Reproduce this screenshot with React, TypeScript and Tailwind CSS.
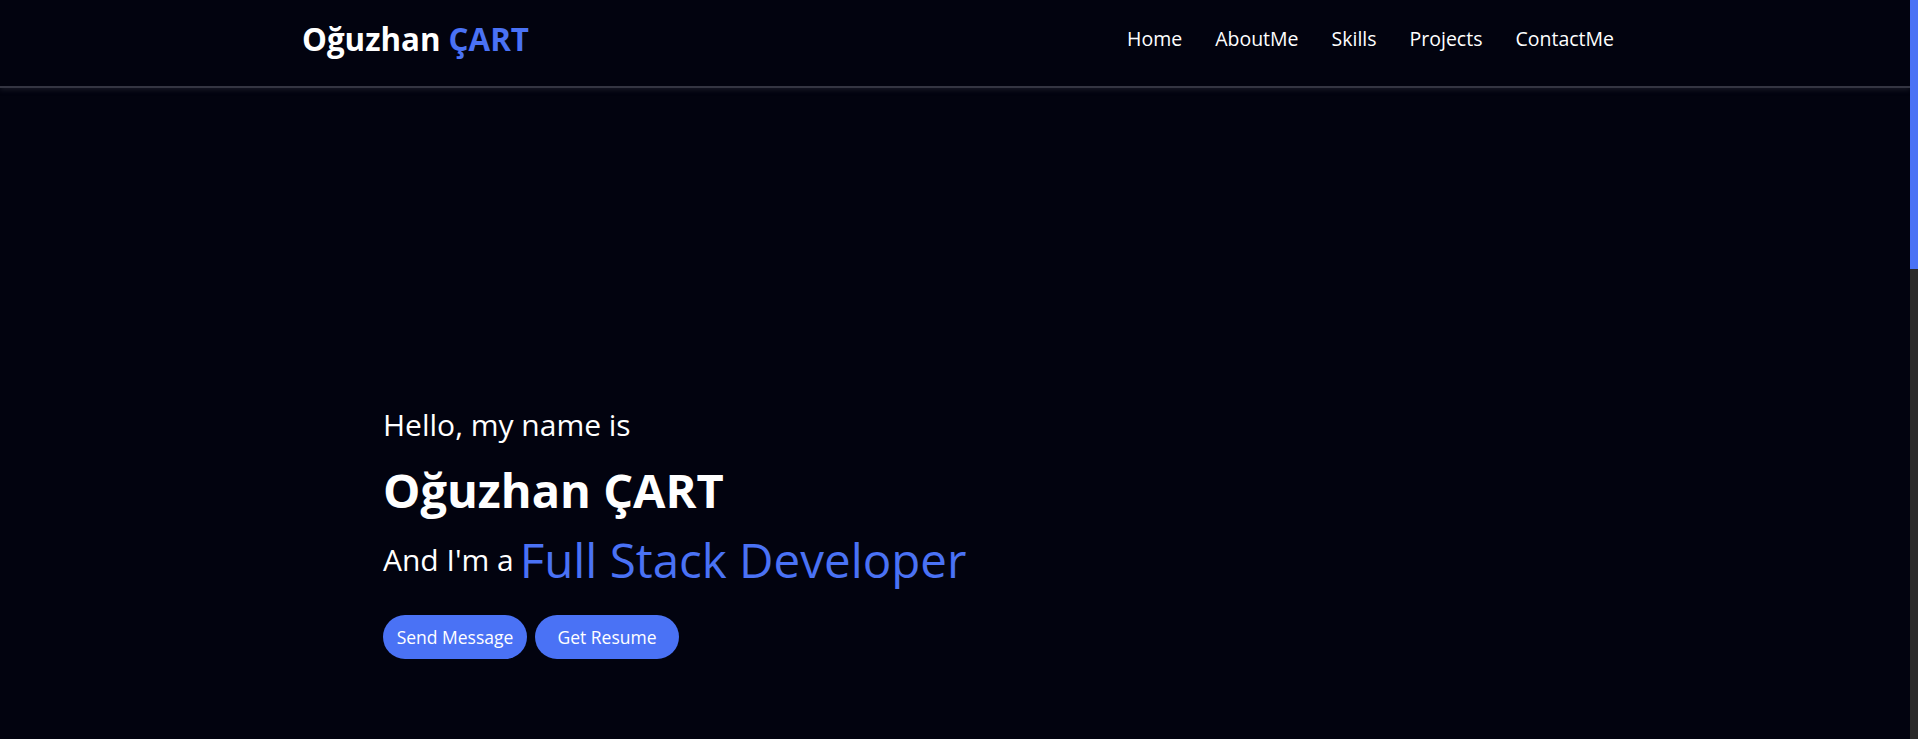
const links = ['Home', 'AboutMe', 'Skills', 'Projects', 'ContactMe'];

function Header() {
  return (
    <header className="h-[86px] bg-[#02030f] pb-[8px] shadow-[0_2px_0_#343542,0_4px_5px_rgba(60,62,78,0.35)]">
      <div className="flex h-full items-center justify-between pl-[302px] pr-[296px]">
        <a href="#" className="text-[31.3px] font-bold text-white">
          Oğuzhan <span className="text-[#4a72f5]">ÇART</span>
        </a>
        <nav>
          <ul className="flex items-center gap-[33px] text-[19.5px] text-white">
            {links.map((l) => (
              <li key={l}>
                <a href="#">{l}</a>
              </li>
            ))}
          </ul>
        </nav>
      </div>
    </header>
  );
}

function Hero() {
  return (
    <section className="pl-[383px] pt-[320px] text-white">
      <h3 className="text-[30px] leading-[38px]">Hello, my name is</h3>
      <h1 className="mt-[18px] text-[47px] font-bold leading-[56px]">Oğuzhan ÇART</h1>
      <h3 className="mt-[12px] flex items-center gap-[6px] text-[30px] leading-[60px]">
        And I'm a
        <span className="text-[47.5px] text-[#4a72f5]">Full Stack Developer</span>
      </h3>
      <div className="mt-[25px] flex gap-[8px]">
        <button className="h-[44px] w-[144px] rounded-[22px] bg-[#4a72f5] text-[17.5px] font-medium text-white">
          Send Message
        </button>
        <button className="h-[44px] w-[144px] rounded-[22px] bg-[#4a72f5] text-[17.5px] font-medium text-white">
          Get Resume
        </button>
      </div>
    </section>
  );
}

// page is scrolled to the top, so the bar is drawn by hand
function Scrollbar() {
  return (
    <div className="flex w-2 flex-col bg-[#2b2a2a]">
      <div className="h-[269px] bg-[#4a72f5]" />
    </div>
  );
}

export default function App() {
  return (
    <div className="flex h-screen overflow-hidden bg-[#02030f] font-['Open_Sans',sans-serif]">
      <main className="flex-1">
        <Header />
        <Hero />
      </main>
      <Scrollbar />
    </div>
  );
}
